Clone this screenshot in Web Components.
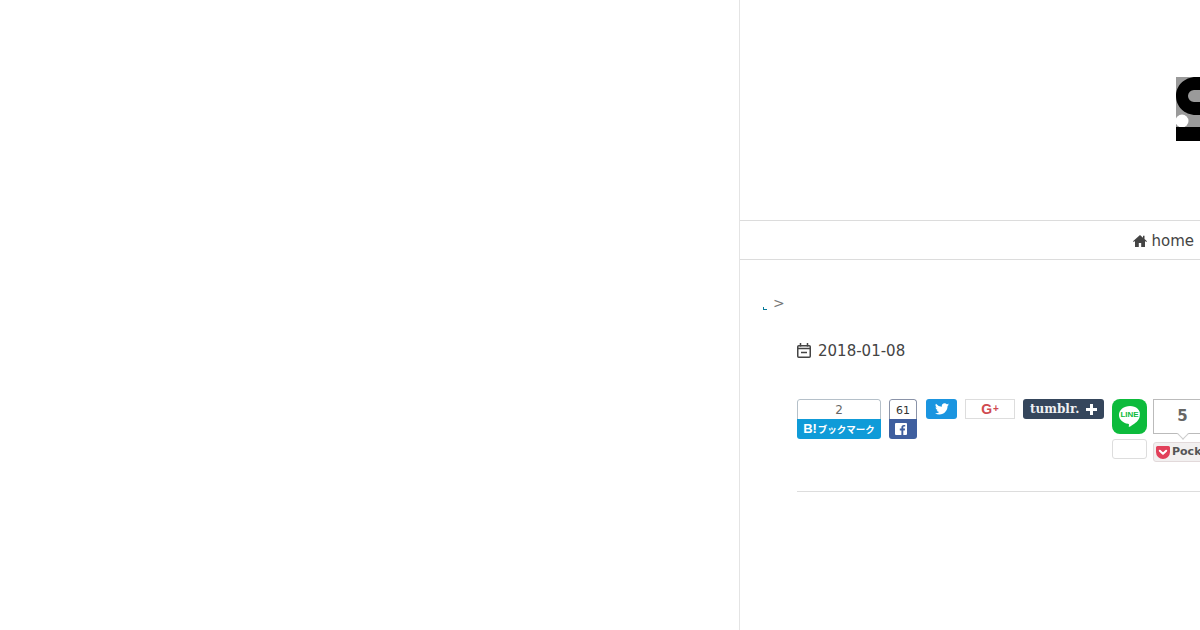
<!DOCTYPE html>
<html lang="ja">
<head>
<meta charset="utf-8">
<title>2018-01-08</title>
<style>
  html, body { margin: 0; height: 100%; overflow: hidden; background: #fff; }
  body { font-family: "DejaVu Sans", sans-serif; color: #444; }
</style>
</head>
<body>
<blog-page>
  <blog-header></blog-header>
  <blog-nav></blog-nav>
  <blog-crumbs></blog-crumbs>
  <blog-article>
    <span slot="date">2018-01-08</span>
    <share-bar></share-bar>
  </blog-article>
</blog-page>

<script>
class BlogPage extends HTMLElement {
  constructor() {
    super();
    this.attachShadow({ mode: 'open' });
    this.shadowRoot.innerHTML = `
      <style>
        :host { display: grid; grid-template-columns: 739px 461px; height: 630px; overflow: hidden; }
        .main { border-left: 1px solid #e4e4e4; overflow: hidden; min-width: 0; }
      </style>
      <div class="empty"></div>
      <div class="main"><slot></slot></div>
    `;
  }
}
customElements.define('blog-page', BlogPage);

class BlogHeader extends HTMLElement {
  constructor() {
    super();
    this.attachShadow({ mode: 'open' });
    this.shadowRoot.innerHTML = `
      <style>
        :host { display: block; height: 220px; box-sizing: border-box; padding: 77px 0 0 436px; }
        svg { display: block; }
      </style>
      <svg width="64" height="64" viewBox="0 0 64 64">
        <rect width="64" height="64" fill="#9a9a9a"/>
        <path d="M20 0C8 0 0 9 0 19s8 19 20 19h44V25H18a6 6 0 0 1 0-12h46V0z" fill="#000"/>
        <circle cx="6" cy="44" r="6.500" fill="#fff"/>
        <rect y="50" width="64" height="14" fill="#000"/>
      </svg>
    `;
  }
}
customElements.define('blog-header', BlogHeader);

class BlogNav extends HTMLElement {
  constructor() {
    super();
    this.attachShadow({ mode: 'open' });
    this.shadowRoot.innerHTML = `
      <style>
        :host { display: flex; justify-content: flex-end; align-items: center; gap: 4px; height: 40px; box-sizing: border-box;
                padding: 2px 6px 0 0; border-top: 1px solid #dcdcdc; border-bottom: 1px solid #dcdcdc; font-size: 15px; color: #444; }
        svg { display: block; }
      </style>
      <svg width="14" height="12" viewBox="0 0 14 12"><path d="M7 0 0 6.200l.8.9L2 6v6h3.800V8h2.400v4H12V6l1.200 1.100.8-.9-2.500-2.200V.8H10v1.900z" fill="#444"/></svg>
      <span>home</span>
    `;
  }
}
customElements.define('blog-nav', BlogNav);

class BlogCrumbs extends HTMLElement {
  constructor() {
    super();
    this.attachShadow({ mode: 'open' });
    this.shadowRoot.innerHTML = `
      <style>
        :host { display: flex; align-items: flex-start; height: 78px; padding: 34px 0 0 23px; box-sizing: border-box;
                font-size: 14px; line-height: 18px; color: #777; }
        .mark { width: 4px; height: 3px; margin-top: 13px; margin-right: 7px; border-left: 1px solid #067a9a; border-bottom: 1px solid #067a9a; box-sizing: border-box; }
        span:last-child { margin-left: -1px; }
      </style>
      <span class="mark"></span><span>&gt;</span>
    `;
  }
}
customElements.define('blog-crumbs', BlogCrumbs);

class BlogArticle extends HTMLElement {
  constructor() {
    super();
    this.attachShadow({ mode: 'open' });
    this.shadowRoot.innerHTML = `
      <style>
        :host { display: block; padding-left: 57px; }
        .date { display: flex; align-items: center; gap: 7px; height: 22px; padding-top: 2px; font-size: 15px; color: #444; }
        svg { display: block; margin-top: -2px; }
        .shares { margin-top: 37px; width: 500px; padding-bottom: 29px; border-bottom: 1px solid #ddd; }
      </style>
      <div class="date">
        <svg width="14" height="15" viewBox="0 0 14 15" fill="none" stroke="#444" stroke-width="1.500">
          <rect x=".75" y="2.750" width="12.500" height="11.500" rx="1"/>
          <path d="M.75 5.500h12.500M3.500 0v3.500M10.500 0v3.500M4 9.500h6"/>
        </svg>
        <slot name="date"></slot>
      </div>
      <div class="shares"><slot></slot></div>
    `;
  }
}
customElements.define('blog-article', BlogArticle);

class ShareBar extends HTMLElement {
  constructor() {
    super();
    this.attachShadow({ mode: 'open' });
    this.shadowRoot.innerHTML = `
      <style>
        :host { display: flex; align-items: flex-start; gap: 8px; height: 63px; }
        svg { display: block; flex: none; }
        .hatena { width: 84px; border-radius: 3px; overflow: hidden; }
        .hatena .n { height: 20px; box-sizing: border-box; border: 1px solid #b5c0c9; border-bottom: 0; border-radius: 3px 3px 0 0;
                     text-align: center; font-size: 12px; line-height: 21px; color: #666; }
        .hatena .b { height: 20px; background: #0f9bd8; color: #fff; display: flex; justify-content: center; align-items: center; gap: 1px;
                     font: bold 9.500px/20px "Noto Sans CJK JP", sans-serif; }
        .hatena .b b { font: bold 13px/20px "Liberation Sans", sans-serif; }
        .fb { width: 28px; border-radius: 3px; overflow: hidden; margin-right: 1px; }
        .fb .n { height: 20px; box-sizing: border-box; border: 1px solid #8a93a8; border-bottom: 0; border-radius: 3px 3px 0 0;
                 text-align: center; font-size: 11px; line-height: 21px; color: #333; }
        .fb .b { height: 20px; background: #3f5f9f; display: flex; align-items: center; padding-left: 6px; }
        .tw { width: 31px; height: 20px; border-radius: 3px; background: #1b95e0; display: flex; align-items: center; justify-content: center; }
        .gp { width: 50px; height: 20px; box-sizing: border-box; border: 1px solid #ddd; display: flex; align-items: center; justify-content: center;
              color: #cf4a50; font: bold 13px/18px "Liberation Sans", sans-serif; }
        .gp span { font-size: 14px; }
        .gp small { font-size: 10px; margin-left: 1px; }
        .tb { width: 81px; height: 20px; border-radius: 3px; background: #35465c; color: #eef0f2; box-sizing: border-box; padding: 0 7px;
              display: flex; align-items: center; justify-content: space-between; font: bold 12px/20px "DejaVu Serif", serif; }
        .ln { width: 35px; margin-right: -2px; }
        .ln .i { width: 35px; height: 35px; border-radius: 8px; background: #0dbb3c; display: flex; align-items: center; justify-content: center; position: relative; }
        .ln .i span { position: absolute; left: 0; right: 0; top: 11px; text-align: center; font: bold 8px/10px "Liberation Sans", sans-serif; color: #0dbb3c; }
        .ln .c { height: 20px; margin-top: 5px; box-sizing: border-box; border: 1px solid #ddd; border-radius: 3px; }
        .pk { width: 59px; flex: none; }
        .pk .n { height: 35px; box-sizing: border-box; border: 1px solid #bbb; text-align: center; font: bold 15px/33px "DejaVu Sans", sans-serif; color: #666; position: relative; }
        .pk .n::after { content: ""; position: absolute; left: 25px; bottom: -5px; width: 7px; height: 7px; background: #fff;
                        border-right: 1px solid #ccc; border-bottom: 1px solid #ccc; transform: rotate(45deg); }
        .pk .b { height: 20px; margin-top: 8px; box-sizing: border-box; border: 1px solid #e2d9da; border-radius: 3px; background: #f2f0f0;
                 display: flex; align-items: center; gap: 2px; padding-left: 2px; font: bold 11px/18px "DejaVu Sans", sans-serif; color: #555; overflow: hidden; white-space: nowrap; }
      </style>
      <div class="hatena"><div class="n">2</div><div class="b"><b>B!</b><span>ブックマーク</span></div></div>
      <div class="fb"><div class="n">61</div><div class="b">
        <svg width="12" height="12" viewBox="0 0 12 12"><path d="M1 0h10a1 1 0 0 1 1 1v10a1 1 0 0 1-1 1H8.300V7.400h1.500l.3-1.800H8.300V4.500c0-.5.200-.9.900-.9h1V2a8 8 0 0 0-1.400-.1C7.300 1.900 6.400 2.800 6.400 4.300v1.300H4.800v1.800h1.600V12H1a1 1 0 0 1-1-1V1a1 1 0 0 1 1-1z" fill="#fff"/></svg>
      </div></div>
      <div class="tw">
        <svg width="14" height="12" viewBox="0 0 24 20"><path d="M24 2.400a10 10 0 0 1-2.800.8A5 5 0 0 0 23.300.5a10 10 0 0 1-3.100 1.200 4.900 4.900 0 0 0-8.400 4.500A14 14 0 0 1 1.700.9a4.900 4.900 0 0 0 1.500 6.600 5 5 0 0 1-2.200-.6c0 2.400 1.700 4.400 3.900 4.900a5 5 0 0 1-2.200.1 5 5 0 0 0 4.600 3.400A9.900 9.900 0 0 1 0 17.300 14 14 0 0 0 7.500 19.500c9.100 0 14.300-7.700 14-14.600A10 10 0 0 0 24 2.400z" fill="#fff"/></svg>
      </div>
      <div class="gp"><span>G</span><small>+</small></div>
      <div class="tb"><span>tumblr.</span>
        <svg width="11" height="11" viewBox="0 0 11 11"><path d="M5.500 0v11M0 5.500h11" stroke="#fff" stroke-width="3"/></svg>
      </div>
      <div class="ln">
        <div class="i">
          <svg width="24" height="23" viewBox="0 0 27 26"><path d="M13.500 1C6.600 1 1 5.500 1 11.200c0 5 4.400 9.100 10.300 10 .4.100.9.300 1 .6.100.300 0 .8 0 1.100l-.2 1c0 .3-.2 1.100 1 .6s6.400-3.800 8.800-6.500c1.600-1.800 2.600-3.600 2.600-5.800C26 5.500 20.400 1 13.500 1z" fill="#fff"/></svg>
          <span>LINE</span>
        </div>
        <div class="c"></div>
      </div>
      <div class="pk">
        <div class="n">5</div>
        <div class="b">
          <svg width="14" height="13" viewBox="0 0 14 13"><path d="M1.500 0h11A1.500 1.500 0 0 1 14 1.500V6a7 7 0 0 1-14 0V1.500A1.500 1.500 0 0 1 1.500 0z" fill="#e2405a"/><path d="M3.800 4.700 7 7.800l3.200-3.100" fill="none" stroke="#fff" stroke-width="2" stroke-linecap="round" stroke-linejoin="round"/></svg>
          <span>Pocket</span>
        </div>
      </div>
    `;
  }
}
customElements.define('share-bar', ShareBar);
</script>
</body>
</html>
